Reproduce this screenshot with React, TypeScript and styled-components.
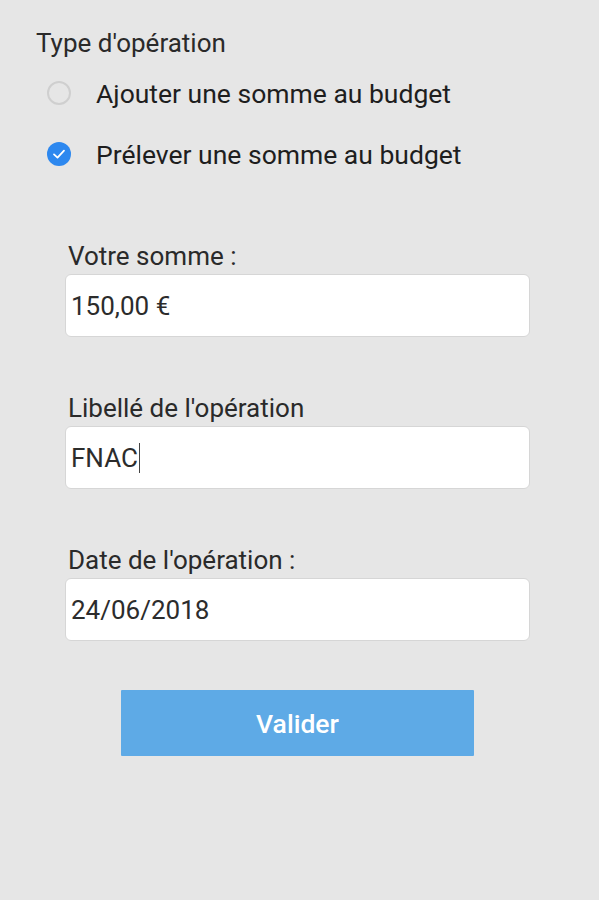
import React from "react"
import styled, { createGlobalStyle } from "styled-components"

const GlobalStyle = createGlobalStyle`
  html, body {
    margin: 0;
    padding: 0;
    background: #e6e6e6;
  }
  body {
    font-family: Roboto, "Liberation Sans", sans-serif;
  }
`

const Page = styled.div`
  width: 599px;
  height: 900px;
  box-sizing: border-box;
  padding: 28px 0 0 36px;
  background: #e6e6e6;
  display: flex;
  flex-direction: column;
`

const SectionTitle = styled.div`
  font-size: 26px;
  line-height: 30px;
  color: #2a2a2a;
`

const RadioGroup = styled.div`
  display: flex;
  flex-direction: column;
  gap: 17px;
  margin-top: 13px;
`

const RadioRow = styled.label`
  display: flex;
  align-items: center;
  height: 44px;
  padding-left: 11px;
  gap: 25px;
  cursor: pointer;
`

const RadioCircle = styled.span<{ checked: boolean }>`
  width: 24px;
  height: 24px;
  box-sizing: border-box;
  border-radius: 50%;
  display: flex;
  align-items: center;
  justify-content: center;
  border: ${p => (p.checked ? "none" : "2px solid #cfcfcf")};
  background: ${p => (p.checked ? "#2d88ef" : "transparent")};
`

const RadioLabel = styled.span`
  font-size: 26.5px;
  color: #1e1e1e;
`

const Form = styled.div`
  display: flex;
  flex-direction: column;
  gap: 56px;
  width: 465px;
  margin: 65px 0 0 29px;
`

const Field = styled.div`
  display: flex;
  flex-direction: column;
  gap: 3px;
`

const FieldLabel = styled.div`
  font-size: 26px;
  line-height: 30px;
  color: #2a2a2a;
  padding-left: 3px;
`

const InputBox = styled.div`
  height: 63px;
  box-sizing: border-box;
  background: #ffffff;
  border: 1px solid #d6d6d6;
  border-radius: 6px;
  display: flex;
  align-items: center;
  padding-left: 5px;
  font-size: 26px;
  color: #2c2c2c;
`

const Caret = styled.span`
  display: inline-block;
  width: 1.5px;
  height: 30px;
  background: #444;
  margin-left: 1px;
`

const ButtonRow = styled.div`
  display: flex;
  justify-content: center;
  margin-top: -7px;
`

const SubmitButton = styled.button`
  width: 353px;
  height: 66px;
  border: none;
  border-radius: 1px;
  background: #5eaae6;
  color: #ffffff;
  font-family: Roboto, "Liberation Sans", sans-serif;
  font-size: 26.5px;
  font-weight: 500;
  cursor: pointer;
`

const CheckIcon = () => (
  <svg width="14" height="14" viewBox="0 0 14 14" fill="none">
    <path d="M2 7.4 L5.5 10.6 L12 3.6" stroke="#fff" strokeWidth="1.8" strokeLinecap="round" strokeLinejoin="round" />
  </svg>
)

export default function App() {
  const [type, setType] = React.useState("prelever")

  const options = [
    { key: "ajouter", label: "Ajouter une somme au budget" },
    { key: "prelever", label: "Prélever une somme au budget" },
  ]

  return (
    <Page>
      <GlobalStyle />
      <SectionTitle>Type d'opération</SectionTitle>
      <RadioGroup>
        {options.map(o => (
          <RadioRow key={o.key} onClick={() => setType(o.key)}>
            <RadioCircle checked={type === o.key}>{type === o.key && <CheckIcon />}</RadioCircle>
            <RadioLabel>{o.label}</RadioLabel>
          </RadioRow>
        ))}
      </RadioGroup>
      <Form>
        <Field>
          <FieldLabel>Votre somme :</FieldLabel>
          <InputBox>150,00 €</InputBox>
        </Field>
        <Field>
          <FieldLabel>Libellé de l'opération</FieldLabel>
          <InputBox>
            FNAC<Caret />
          </InputBox>
        </Field>
        <Field>
          <FieldLabel>Date de l'opération :</FieldLabel>
          <InputBox>24/06/2018</InputBox>
        </Field>
        <ButtonRow>
          <SubmitButton>Valider</SubmitButton>
        </ButtonRow>
      </Form>
    </Page>
  )
}
